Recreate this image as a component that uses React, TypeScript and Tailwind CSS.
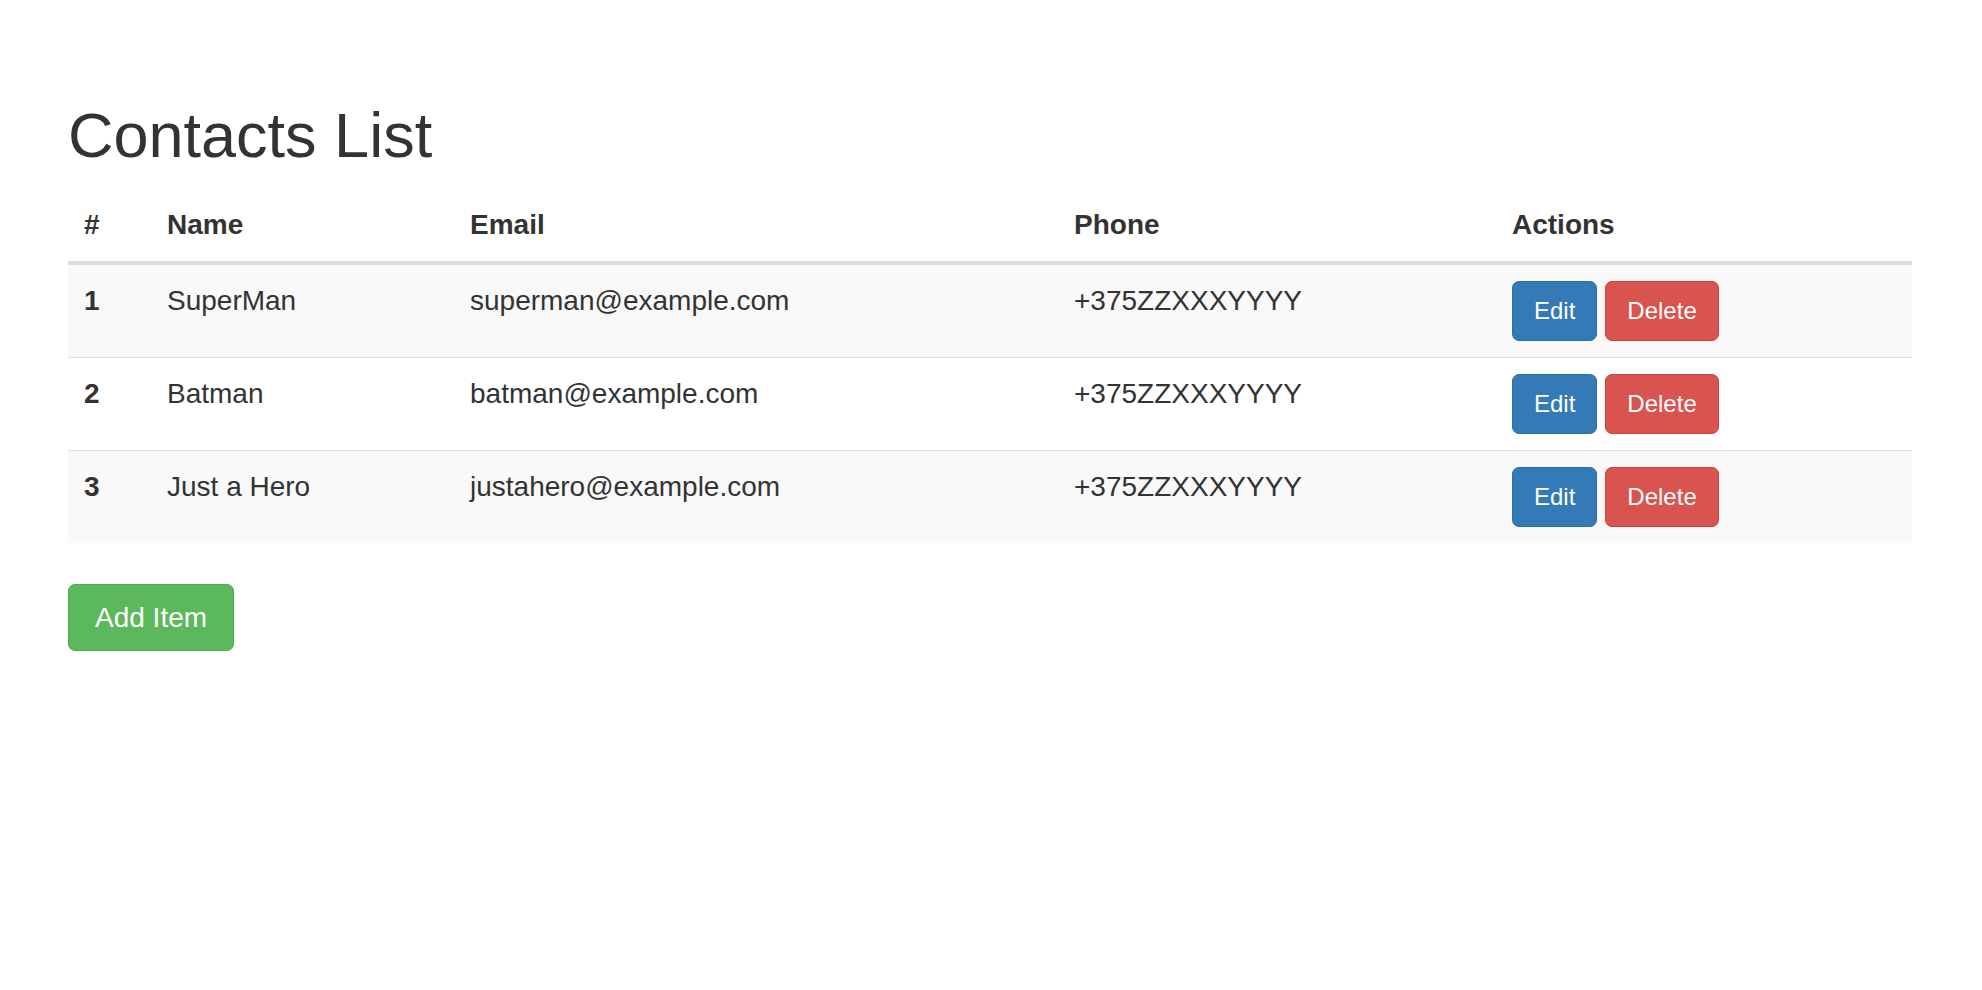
const contacts = [
  { id: 1, name: "SuperMan", email: "superman@example.com", phone: "+375ZZXXXYYYY" },
  { id: 2, name: "Batman", email: "batman@example.com", phone: "+375ZZXXXYYYY" },
  { id: 3, name: "Just a Hero", email: "justahero@example.com", phone: "+375ZZXXXYYYY" },
];

const App = () => {
  return (
    <div className="min-h-screen bg-white pl-[68px] pr-[70px] pt-[101px] text-[#333] font-['Liberation_Sans',Arial,sans-serif]">
      <h1 className="text-[63px] leading-[69px] font-normal">Contacts List</h1>
      <table className="mt-[19px] w-full table-fixed border-collapse text-[28px]">
        <thead>
          <tr className="border-b-4 border-[#ddd]">
            <th className="w-[83px] px-[16px] pt-[16px] pb-[16px] text-left font-bold leading-[40px]">#</th>
            <th className="w-[303px] px-[16px] pt-[16px] pb-[16px] text-left font-bold leading-[40px]">Name</th>
            <th className="w-[604px] px-[16px] pt-[16px] pb-[16px] text-left font-bold leading-[40px]">Email</th>
            <th className="w-[438px] px-[16px] pt-[16px] pb-[16px] text-left font-bold leading-[40px]">Phone</th>
            <th className="px-[16px] pt-[16px] pb-[16px] text-left font-bold leading-[40px]">Actions</th>
          </tr>
        </thead>
        <tbody>
          {contacts.map((item, i) => (
            <tr
              key={item.id}
              className={
                (i % 2 === 0 ? "bg-[#f9f9f9]" : "bg-white") +
                (i > 0 ? " border-t border-[#ddd]" : "")
              }
            >
              <td className="px-[16px] pt-[16px] pb-[16px] align-top font-bold leading-[40px]">{item.id}</td>
              <td className="px-[16px] pt-[16px] pb-[16px] align-top leading-[40px]">{item.name}</td>
              <td className="px-[16px] pt-[16px] pb-[16px] align-top leading-[40px]">{item.email}</td>
              <td className="px-[16px] pt-[16px] pb-[16px] align-top leading-[40px]">{item.phone}</td>
              <td className="px-[16px] pt-[16px] pb-[16px] align-top">
                <div className="flex gap-[8px]">
                  <button className="h-[60px] rounded-[7px] border border-[#2e6da4] bg-[#337ab7] px-[21px] text-[24px] text-white">
                    Edit
                  </button>
                  <button className="h-[60px] rounded-[7px] border border-[#d43f3a] bg-[#d9534f] px-[21px] text-[24px] text-white">
                    Delete
                  </button>
                </div>
              </td>
            </tr>
          ))}
        </tbody>
      </table>
      <button className="mt-[41px] h-[67px] rounded-[7px] border border-[#4cae4c] bg-[#5cb85c] px-[26px] text-[28px] text-white">
        Add Item
      </button>
    </div>
  );
};

export default App;
